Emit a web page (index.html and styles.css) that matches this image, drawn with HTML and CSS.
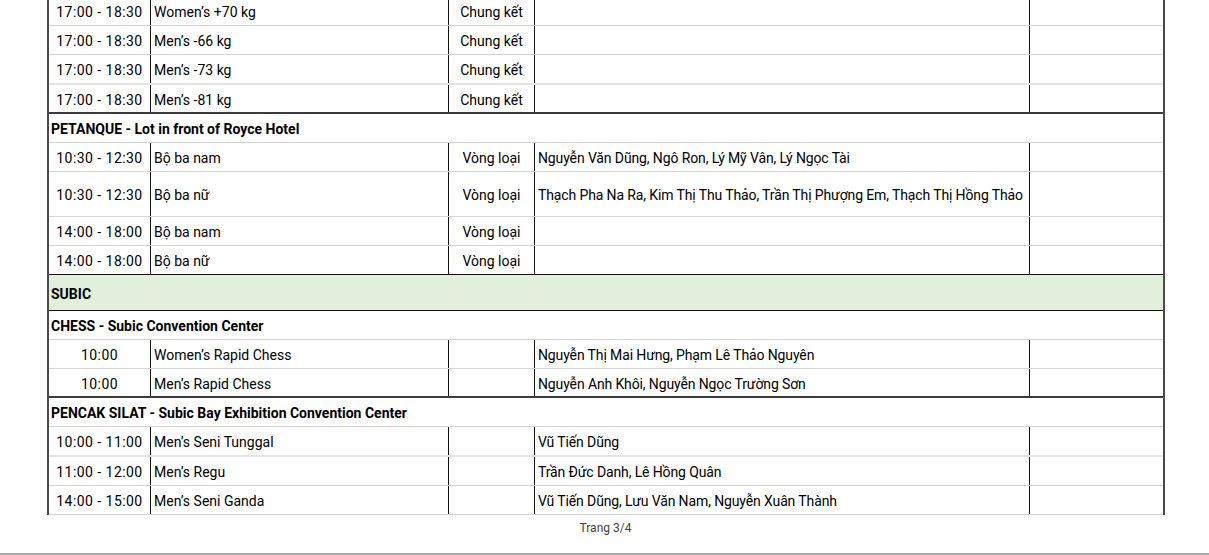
FILE: index.html
```html
<!DOCTYPE html>
<html lang="vi">
<head>
<meta charset="utf-8">
<title>Lịch thi đấu - Trang 3/4</title>
<link rel="stylesheet" href="styles.css">
</head>
<body>
<div class="page">
  <div class="sheet">
    <div class="row">
      <div class="c time">17:00 - 18:30</div><div class="c event">Women’s +70 kg</div><div class="c round">Chung kết</div><div class="c ath"></div><div class="c last"></div>
    </div>
    <div class="row">
      <div class="c time">17:00 - 18:30</div><div class="c event">Men’s -66 kg</div><div class="c round">Chung kết</div><div class="c ath"></div><div class="c last"></div>
    </div>
    <div class="row soft">
      <div class="c time">17:00 - 18:30</div><div class="c event">Men’s -73 kg</div><div class="c round">Chung kết</div><div class="c ath"></div><div class="c last"></div>
    </div>
    <div class="row end">
      <div class="c time">17:00 - 18:30</div><div class="c event">Men’s -81 kg</div><div class="c round">Chung kết</div><div class="c ath"></div><div class="c last"></div>
    </div>

    <div class="head">PETANQUE - Lot in front of Royce Hotel</div>
    <div class="row">
      <div class="c time">10:30 - 12:30</div><div class="c event">Bộ ba nam</div><div class="c round">Vòng loại</div><div class="c ath">Nguyễn Văn Dũng, Ngô Ron, Lý Mỹ Vân, Lý Ngọc Tài</div><div class="c last"></div>
    </div>
    <div class="row tall">
      <div class="c time">10:30 - 12:30</div><div class="c event">Bộ ba nữ</div><div class="c round">Vòng loại</div><div class="c ath">Thạch Pha Na Ra, Kim Thị Thu Thảo, Trần Thị Phượng Em, Thạch Thị Hồng Thảo</div><div class="c last"></div>
    </div>
    <div class="row">
      <div class="c time">14:00 - 18:00</div><div class="c event">Bộ ba nam</div><div class="c round">Vòng loại</div><div class="c ath"></div><div class="c last"></div>
    </div>
    <div class="row dark">
      <div class="c time">14:00 - 18:00</div><div class="c event">Bộ ba nữ</div><div class="c round">Vòng loại</div><div class="c ath"></div><div class="c last"></div>
    </div>

    <div class="region">SUBIC</div>

    <div class="head">CHESS - Subic Convention Center</div>
    <div class="row">
      <div class="c time">10:00</div><div class="c event">Women’s Rapid Chess</div><div class="c round"></div><div class="c ath">Nguyễn Thị Mai Hưng, Phạm Lê Thảo Nguyên</div><div class="c last"></div>
    </div>
    <div class="row end">
      <div class="c time">10:00</div><div class="c event">Men’s Rapid Chess</div><div class="c round"></div><div class="c ath">Nguyễn Anh Khôi, Nguyễn Ngọc Trường Sơn</div><div class="c last"></div>
    </div>

    <div class="head">PENCAK SILAT - Subic Bay Exhibition Convention Center</div>
    <div class="row soft">
      <div class="c time">10:00 - 11:00</div><div class="c event">Men’s Seni Tunggal</div><div class="c round"></div><div class="c ath">Vũ Tiến Dũng</div><div class="c last"></div>
    </div>
    <div class="row">
      <div class="c time">11:00 - 12:00</div><div class="c event">Men’s Regu</div><div class="c round"></div><div class="c ath">Trần Đức Danh, Lê Hồng Quân</div><div class="c last"></div>
    </div>
    <div class="row">
      <div class="c time">14:00 - 15:00</div><div class="c event">Men’s Seni Ganda</div><div class="c round"></div><div class="c ath">Vũ Tiến Dũng, Lưu Văn Nam, Nguyễn Xuân Thành</div><div class="c last"></div>
    </div>
  </div>
  <div class="footer">Trang 3/4</div>
  <div class="pagebreak"></div>
</div>
</body>
</html>
```

FILE: styles.css
```css
html, body {
  margin: 0;
  padding: 0;
  background: #ffffff;
}

body {
  font-family: Roboto, "Liberation Sans", Arial, sans-serif;
  font-size: 14px;
  color: #000000;
  overflow: hidden;
  height: 555px;
}

.page {
  display: flex;
  flex-direction: column;
  height: 555px;
}

.sheet {
  margin: -3px 0 0 47px;
  width: 1118px;
  box-sizing: border-box;
  border-left: 2px solid #4a4a4a;
  border-right: 2px solid #4a4a4a;
}

.row {
  display: grid;
  grid-template-columns: 102px 298px 86px 495px 1fr;
  height: 29px;
  box-sizing: border-box;
  border-bottom: 1px solid #d4d4d4;
}

.row.soft {
  height: 30px;
  border-bottom: 2px solid #e4e4e4;
}

.row.end {
  height: 29px;
  border-bottom: 2px solid #3c3c3c;
}

.row.dark {
  border-bottom: 1px solid #111111;
}

.row.tall {
  height: 45px;
}

.c {
  display: flex;
  align-items: center;
  box-sizing: border-box;
  padding: 2px 3px 0;
  white-space: nowrap;
  overflow: hidden;
  line-height: 16px;
}

.time {
  justify-content: center;
  border-right: 1px solid #111111;
  padding-left: 3px;
  letter-spacing: 0.45px;
}

.event {
  border-right: 1px solid #111111;
}

.round {
  justify-content: center;
  border-right: 1px solid #111111;
}

.ath {
  border-right: 1px solid #111111;
  letter-spacing: -0.12px;
}

.head {
  height: 29px;
  box-sizing: border-box;
  display: flex;
  align-items: center;
  padding: 2px 2px 0;
  font-weight: 700;
  border-bottom: 1px solid #d4d4d4;
}

.region {
  height: 36px;
  box-sizing: border-box;
  display: flex;
  align-items: center;
  padding: 2px 2px 0;
  font-weight: 700;
  background: #e2efdb;
  border-bottom: 1px solid #111111;
}

.footer {
  margin-top: 5px;
  text-align: center;
  font-size: 12px;
  color: #4a4040;
  line-height: 16px;
  padding-left: 2px;
}

.pagebreak {
  margin-top: auto;
  margin-bottom: 0;
  height: 2px;
  background: #a8a8a8;
}
```
